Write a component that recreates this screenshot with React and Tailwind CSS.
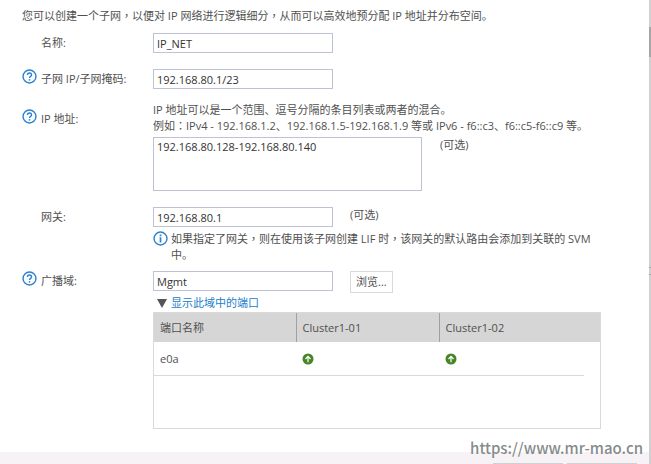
import { useState } from 'react';

const HelpIcon = () => (
  <svg viewBox="0 0 16 16" className="h-[15px] w-[15px]" fill="none" stroke="#2b82d0">
    <circle cx="8" cy="8" r="6.9" strokeWidth="1.5" />
    <path d="M5.8 6.5c0-1.3.9-2.2 2.2-2.2s2.2.8 2.2 2c0 1.5-2.2 1.6-2.2 3.3" strokeWidth="1.5" />
    <path d="M8 10.8v1.6" strokeWidth="1.6" />
  </svg>
);

const InfoIcon = () => (
  <svg viewBox="0 0 16 16" className="h-[15px] w-[15px] shrink-0" fill="none" stroke="#2b82d0">
    <circle cx="8" cy="8" r="6.9" strokeWidth="1.5" />
    <path d="M8 6.6v5.6M8 3.8v1.7" strokeWidth="1.8" />
  </svg>
);

const PortUpIcon = () => (
  <svg viewBox="0 0 12 12" className="h-3 w-3" role="img" aria-label="up">
    <circle cx="6" cy="6" r="5.5" fill="#478527" />
    <path d="M6 9.2V3.6M3.5 6L6 3.4 8.5 6" fill="none" stroke="#fff" strokeWidth="1.2" />
  </svg>
);

// full-width punctuation centred in its box
const Mark = ({ children }) => (
  <span className="font-['Noto_Sans_CJK_TC',sans-serif] leading-none">{children}</span>
);

const inputClass =
  'h-5 w-[180px] border border-[#bfc1d7] bg-white px-[3px] text-[11px] leading-4 text-[#333] outline-none';

const Field = ({ id, label, help, labelClass = '', children }) => (
  <div className="flex items-start">
    <div className={`flex w-[131px] shrink-0 items-start ${labelClass}`}>
      <span className="w-[19px] shrink-0">{help && <HelpIcon />}</span>
      <label htmlFor={id} className="pt-0.5">
        {label}
      </label>
    </div>
    <div className="min-w-0 flex-1">{children}</div>
  </div>
);

const ports = [{ name: 'e0a' }];

const App = () => {
  const [name, setName] = useState('IP_NET');
  const [subnet, setSubnet] = useState('192.168.80.1/23');
  const [addresses, setAddresses] = useState('192.168.80.128-192.168.80.140');
  const [gateway, setGateway] = useState('192.168.80.1');
  const [domain, setDomain] = useState('Mgmt');
  const [showPorts, setShowPorts] = useState(true);

  return (
    <div className="relative flex min-h-screen bg-white font-['Open_Sans','Noto_Sans_CJK_SC',sans-serif] text-[11px] leading-4 text-[#505050]">
      <div className="flex min-w-0 flex-1 flex-col">
        <main className="flex-1 pt-2 pr-12 pb-[23px] pl-[22px]">
          <p className="mb-[9px]">
            您可以创建一个子网<Mark>，</Mark>以便对 IP 网络进行逻辑细分<Mark>，</Mark>从而可以高效地预分配 IP 地址并分布空间。
          </p>

          <Field id="name" label="名称:">
            <input id="name" className={inputClass} value={name} onChange={(e) => setName(e.target.value)} />
          </Field>

          <div className="mt-4">
            <Field id="subnet" label="子网 IP/子网掩码:" help>
              <input id="subnet" className={inputClass} value={subnet} onChange={(e) => setSubnet(e.target.value)} />
            </Field>
          </div>

          <div className="mt-[13px]">
            <Field id="addresses" label="IP 地址:" help labelClass="pt-[7px]">
              <p>
                IP 地址可以是一个范围、逗号分隔的条目列表或两者的混合。
                <br />
                例如<Mark>：</Mark>IPv4 - 192.168.1.2、192.168.1.5-192.168.1.9 等或 IPv6 - f6::c3、f6::c5-f6::c9 等。
              </p>
              <div className="mt-[3px] flex items-start">
                <textarea
                  id="addresses"
                  className="block h-[54px] w-[269px] resize-none border border-[#bfc1d7] px-[3px] pt-px text-[#333] outline-none"
                  value={addresses}
                  onChange={(e) => setAddresses(e.target.value)}
                />
                <span className="ml-[18px]">(可选)</span>
              </div>
            </Field>
          </div>

          <div className="mt-4">
            <Field id="gateway" label="网关:">
              <div className="flex items-start">
                <input id="gateway" className={inputClass} value={gateway} onChange={(e) => setGateway(e.target.value)} />
                <span className="ml-[17px]">(可选)</span>
              </div>
              <div className="mt-1 flex items-start gap-[3px]">
                <InfoIcon />
                <p>
                  如果指定了网关<Mark>，</Mark>则在使用该子网创建 LIF 时<Mark>，</Mark>该网关的默认路由会添加到关联的 SVM
                  <br />
                  中。
                </p>
              </div>
            </Field>
          </div>

          <div className="mt-2">
            <Field id="domain" label="广播域:" help>
              <div className="flex items-start">
                <input id="domain" className={inputClass} value={domain} onChange={(e) => setDomain(e.target.value)} />
                <button type="button" className="ml-[17px] h-[22px] border border-[#d9d9d9] px-[5px]">
                  浏览...
                </button>
              </div>
              <button
                type="button"
                className="mt-0.5 flex items-center gap-1 pl-1 text-[#1b80cb]"
                aria-expanded={showPorts}
                onClick={() => setShowPorts(!showPorts)}
              >
                <svg viewBox="0 0 10 9" className="h-[9px] w-2.5" fill="#555">
                  <path d="M0 0h10L5 9z" />
                </svg>
                显示此域中的端口
              </button>
              {showPorts && (
                <div className="mt-px min-h-[117px] border border-[#d9d9d9]">
                  <table className="w-full table-fixed border-collapse text-left">
                    <thead className="bg-[#d6d6d6]">
                      <tr className="h-[29px]">
                        <th className="w-[142px] pl-1.5 font-normal">端口名称</th>
                        <th className="w-[143px] border-l border-[#a0a0a0] pl-1.5 font-normal">Cluster1-01</th>
                        <th className="border-l border-[#a0a0a0] pl-1.5 font-normal">Cluster1-02</th>
                        <th className="w-4" aria-label="scroll" />
                      </tr>
                    </thead>
                    <tbody>
                      {ports.map((port) => (
                        <tr key={port.name} className="h-[33px]">
                          <td className="border-b border-[#d9d9d9] pt-0.5 pl-1.5">{port.name}</td>
                          <td className="border-b border-[#d9d9d9] pt-0.5 pl-1.5">
                            <PortUpIcon />
                          </td>
                          <td className="border-b border-[#d9d9d9] pt-0.5 pl-1.5">
                            <PortUpIcon />
                          </td>
                          <td />
                        </tr>
                      ))}
                    </tbody>
                  </table>
                </div>
              )}
            </Field>
          </div>
        </main>

        <footer className="flex h-3 items-end justify-end gap-1 bg-[#f6f2f6] pr-3">
          <div className="h-px w-[70px] bg-[#d0d0d0]" />
          <div className="h-px w-[70px] bg-[#d0d0d0]" />
        </footer>
      </div>

      <div className="w-0.5 shrink-0 bg-[#d0d0d0] pt-[27px]">
        <div className="h-[30px] bg-[#a6a6a6]" />
        <div className="mt-[210px] h-2 border-y border-[#a6a6a6]" />
      </div>

      <div className="absolute right-2 bottom-1 font-['Noto_Sans_CJK_SC',sans-serif] text-[15px] leading-6 font-medium text-[#858c8a]">
        https://www.mr-mao.cn
      </div>
    </div>
  );
};

export default App;
